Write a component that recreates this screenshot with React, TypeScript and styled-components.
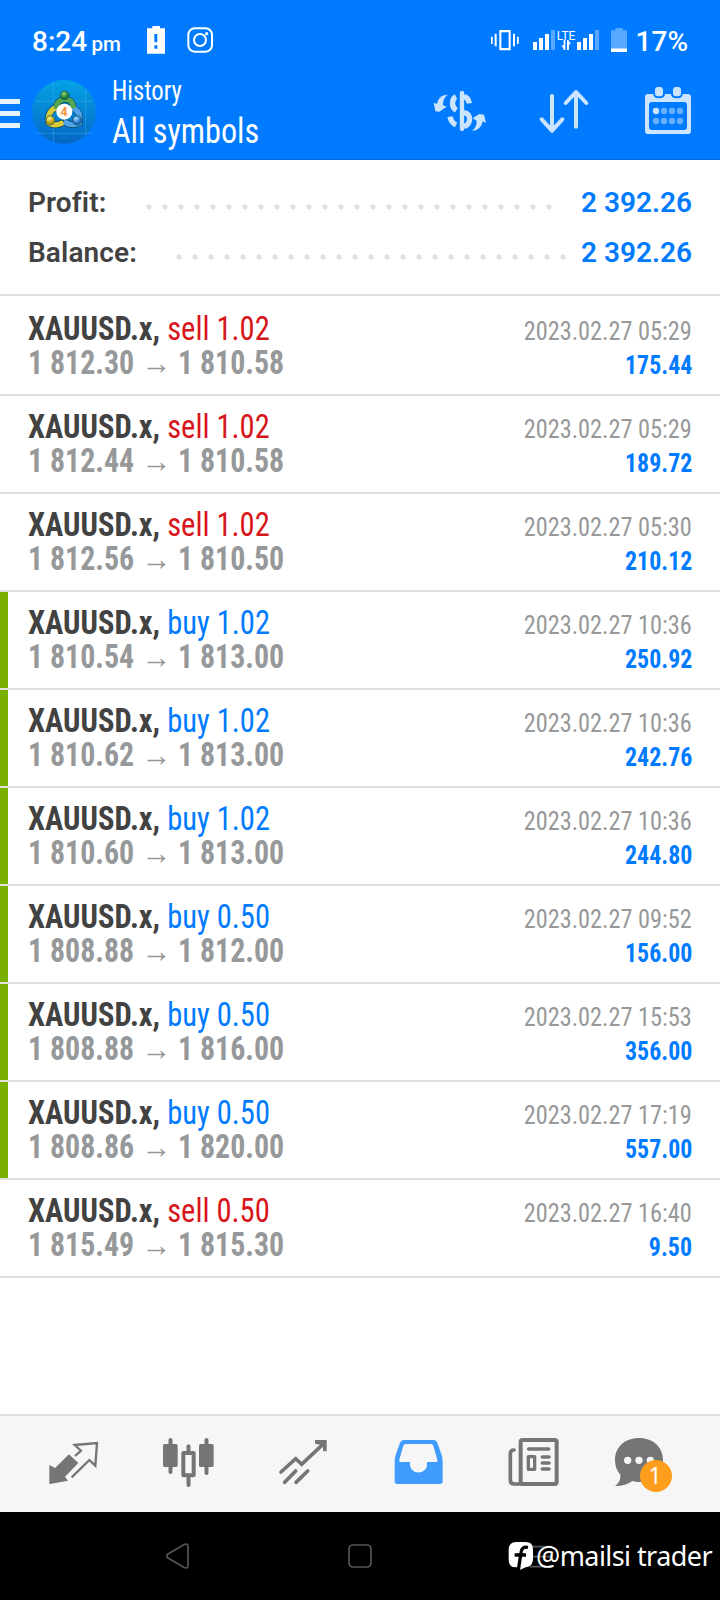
import React from "react";
import styled, { createGlobalStyle } from "styled-components";

const blue = "#007bff";

const Global = createGlobalStyle`
  * { box-sizing: border-box; }
  body { margin: 0; background: #fff; font-family: Roboto, sans-serif; }
  svg { display: block; flex: none; }
`;

const Screen = styled.div`
  position: relative;
  width: 720px;
  height: 1600px;
  display: flex;
  flex-direction: column;
  overflow: hidden;
  background: #fff;
`;

const Narrow = styled.span<{ $scale?: number; $right?: boolean }>`
  display: inline-block;
  white-space: pre;
  font-stretch: 75%;
  transform: scaleX(${(p) => p.$scale ?? 1});
  transform-origin: ${(p) => (p.$right ? "right" : "left")} center;
`;

const Header = styled.header`
  height: 160px;
  background: ${blue};
  border-bottom: 1px solid #0a6ad4;
  color: #fff;
`;

const StatusBar = styled.div`
  display: flex;
  justify-content: space-between;
  height: 70px;
  padding: 20px 32px 0 32px;
  line-height: 44px;
  font-size: 28px;
  font-weight: 500;
`;

const StatusGroup = styled.div`
  display: flex;
  align-items: flex-start;
  svg { margin-top: 6px; }
`;

const Clock = styled.span`
  width: 112px;
  white-space: nowrap;
  word-spacing: -2.5px;
  small { font-size: 20.5px; }
`;

const Percent = styled.span`
  margin-left: 3px;
`;

const AppBar = styled.div`
  display: flex;
  height: 90px;
  padding-right: 22px;
`;

const MenuButton = styled.div`
  display: flex;
  flex-direction: column;
  gap: 7px;
  width: 32px;
  padding-top: 29px;
`;

const MenuLine = styled.span`
  width: 20px;
  height: 5px;
  background: #e6f2ff;
`;

const LogoSvg = styled.svg`
  margin-top: 10px;
`;

const Titles = styled.div`
  flex: 1;
  padding-left: 16px;
  display: flex;
  flex-direction: column;
`;

const Caption = styled.div`
  font-size: 27px;
  line-height: 42px;
`;

const Title = styled.div`
  font-size: 35px;
  line-height: 39px;
`;

const Actions = styled.div`
  display: flex;
  gap: 44px;
  padding-top: 11px;
`;

const Summary = styled.section`
  height: 136px;
  padding: 18px 28px 0;
  border-bottom: 2px solid #e0e0e0;
`;

const SummaryLine = styled.div`
  display: flex;
  align-items: baseline;
  height: 50px;
  line-height: 50px;
  font-size: 28px;
  font-weight: 650;
  color: #424242;
`;

const SummaryLabel = styled.span<{ $width: number }>`
  width: ${(p) => p.$width}px;
  white-space: nowrap;
  letter-spacing: 0.1px;
`;

const Dots = styled.span<{ $count: number }>`
  width: ${(p) => p.$count * 16}px;
  height: 10px;
  background: radial-gradient(circle at 8px 5px, #e1e1e1 2.3px, transparent 3px) 0 0 / 16px 10px repeat-x;
`;

const SummaryValue = styled.span`
  flex: 1;
  text-align: right;
  white-space: nowrap;
  color: ${blue};
`;

const Deals = styled.main`
  flex: 1;
  padding-top: 2px;
`;

const DealRow = styled.article<{ $marked: boolean }>`
  height: 98px;
  padding: 14px 28px 0;
  border-bottom: 2px solid #e0e0e0;
  box-shadow: ${(p) => (p.$marked ? "inset 8px 0 #7ab000" : "none")};
`;

const DealLine = styled.div`
  display: flex;
  justify-content: space-between;
  align-items: baseline;
  height: 34px;
  line-height: 34px;
  white-space: nowrap;
`;

const Symbol = styled(Narrow)`
  font-size: 33px;
  font-weight: 700;
  color: #424242;
`;

const Side = styled.span<{ $buy: boolean }>`
  font-weight: 400;
  color: ${(p) => (p.$buy ? blue : "#d8151b")};
`;

const Prices = styled(Narrow)`
  font-size: 33px;
  font-weight: 700;
  color: #969899;
`;

const When = styled(Narrow)`
  font-size: 26px;
  color: #969899;
`;

const Profit = styled(Narrow)`
  font-size: 26px;
  font-weight: 700;
  color: ${blue};
`;

const TabBar = styled.nav`
  display: flex;
  height: 98px;
  padding-left: 16px;
  background: #f6f6f6;
  border-top: 2px solid #e0e0e0;
`;

const Tab = styled.div`
  position: relative;
  width: 115px;
  display: flex;
  align-items: center;
  justify-content: center;
`;

const Badge = styled.span`
  position: absolute;
  left: 49px;
  top: 44px;
  width: 32px;
  height: 32px;
  padding-right: 2px;
  border-radius: 50%;
  background: #ff9d1c;
  color: #fff;
  font: 23px/31px "Noto Sans", sans-serif;
  text-align: center;
`;

const SystemBar = styled.footer`
  display: flex;
  align-items: center;
  justify-content: center;
  gap: 142px;
  height: 88px;
  background: #000;
`;

const Watermark = styled.div`
  position: absolute;
  right: 8px;
  bottom: 22px;
  display: flex;
  align-items: center;
  gap: 2px;
  color: #fff;
  font: 27px/44px "Noto Sans", sans-serif;
  letter-spacing: -0.57px;
  white-space: nowrap;
`;

const StatusLeftIcons = () => (
  <svg width="80" height="28" viewBox="432 78 240 84">
    <path fill="#fff" fillRule="evenodd" d="M457 78h23v7h15v76h-54V85h16zM463 102v25h9v-25zM463 136v10h9v-10z" />
    <g fill="none" stroke="#fff" strokeWidth="6">
      <rect x="565" y="85" width="71" height="70" rx="19" />
      <circle cx="600" cy="120" r="18" />
    </g>
    <circle cx="620" cy="101" r="5" fill="#fff" />
  </svg>
);

const StatusRightIcons = () => (
  <svg width="144" height="28" viewBox="207 78 432 84">
    <g fill="#fff">
      <path fillRule="evenodd" d="M238 90h34v61h-34zM244 97v47h22V97z" />
      <path d="M213 110h5v22h-5zM224 101h6v38h-6zM279 101h6v38h-6zM291 110h5v22h-5zM339 126h12v24h-12zM357 114h12v36h-12zM375 102h12v48h-12zM471 126h12v24h-12zM489 114h12v36h-12zM507 102h12v48h-12z" />
      <path d="M431 120h5v30h-4l-7-14h6zM441 120h4l8 13h-6v17h-6z" />
    </g>
    <path fill="#58a8ff" d="M393 90h12v60h-12zM525 90h12v60h-12zM586 84h22v7h13v54h-48V91h13z" />
    <path fill="#fff" d="M573 145h48v11h-48z" />
    <text x="410" y="120" fontSize="36" fontFamily="Roboto" fontWeight="400" fill="#fff" textLength="56" lengthAdjust="spacingAndGlyphs">LTE</text>
  </svg>
);

const Logo = () => (
  <LogoSvg width="64" height="64" viewBox="96 240 192 192">
    <defs>
      <linearGradient id="sky" x1="0" y1="0" x2="0" y2="1">
        <stop offset="0" stopColor="#05a3e6" />
        <stop offset="1" stopColor="#0566c4" />
      </linearGradient>
      <radialGradient id="green" cx=".4" cy=".3"><stop offset="0" stopColor="#8fd07a" /><stop offset="1" stopColor="#1f7d35" /></radialGradient>
      <radialGradient id="gold" cx=".4" cy=".3"><stop offset="0" stopColor="#fff07a" /><stop offset="1" stopColor="#b39a12" /></radialGradient>
      <radialGradient id="azure" cx=".4" cy=".3"><stop offset="0" stopColor="#a5dcff" /><stop offset="1" stopColor="#1c6cc0" /></radialGradient>
    </defs>
    <circle cx="192" cy="336" r="96" fill="url(#sky)" />
    <path d="M160 246v180M257 266v140M106 304h172M106 400h172" stroke="#3fb0ea" strokeWidth="2" opacity=".7" />
    <g fill="none" strokeLinecap="round">
      <g stroke="#0b4d6c" strokeWidth="21">
        <path d="M169 322c2-28 46-34 50-2" />
        <path d="M170 322c-20 8-28 26-24 46 12 8 26 8 38 2" />
        <path d="M214 322c22 8 28 26 24 46-12 8-28 8-40 0" />
      </g>
      <path d="M170 322c-20 8-28 26-24 46 12 8 26 8 38 2" stroke="#d9cc3a" strokeWidth="16" />
      <path d="M214 322c22 8 28 26 24 46-12 8-28 8-40 0" stroke="#4fa3e6" strokeWidth="16" />
      <path d="M169 320c2-26 46-32 50-2" stroke="#52a852" strokeWidth="16" />
    </g>
    <g stroke="#0b4d5c" strokeWidth="2">
      <circle cx="194" cy="286" r="13" fill="url(#green)" />
      <circle cx="151" cy="361" r="14" fill="url(#gold)" />
      <circle cx="231" cy="361" r="14" fill="url(#azure)" />
    </g>
    <circle cx="193" cy="335" r="24" fill="#fff" />
    <text x="192" y="349" textAnchor="middle" fontFamily="Roboto" fontWeight="700" fontSize="39" fill="#f5913e">4</text>
  </LogoSvg>
);

const CurrencyIcon = () => (
  <svg width="60" height="60" viewBox="30 243 180 180">
    <g fill="none" stroke="#cce5ff" strokeWidth="13">
      <path d="M126 279V387" strokeLinecap="round" />
      <path strokeWidth="16" d="M108 290c-13 6-15 31 1 41M90 350c2 12 8 20 18 25M132 290c9 2 14 8 16 20M132 338c23 3 22 36 0 41" />
    </g>
    <g fill="#cce5ff">
      <path d="M83 284c-12 10-14 20-14 32l11 4-22 15-12-1-5-26 10 4c3-16 12-28 32-28z" />
      <path d="M156 393c12-10 14-20 14-31l-12-7 20-13 14 2 6 25-10-5c-3 16-12 27-32 29z" />
    </g>
  </svg>
);

const SortIcon = () => (
  <svg width="60" height="60" viewBox="342 243 180 180" fill="none" stroke="#cce5ff" strokeWidth="12" strokeLinecap="round" strokeLinejoin="round">
    <path d="M396 288v104M365 358l31 34 31-34M468 380V277M437 309l31-33 31 33" />
  </svg>
);

const CalendarIcon = () => (
  <svg width="60" height="60" viewBox="654 243 180 180">
    <path fill="#cce5ff" fillRule="evenodd" d="M684 282h16c0 8 6 13 17 13s18-5 18-13h18c0 8 6 13 17 13s18-5 18-13h15q10 0 10 10v100q0 10-10 10H685q-10 0-10-10V292q0-10 9-10zM696 306q-9 0-9 9v66q0 9 9 9h96q9 0 9-9v-66q0-9-9-9z" />
    <rect x="705" y="261" width="24" height="28" rx="9" fill="#cce5ff" />
    <rect x="759" y="261" width="24" height="28" rx="9" fill="#cce5ff" />
    {[333, 363].map((y) =>
      [708, 732, 756, 780].map((x) => (
        <circle key={`${x}-${y}`} cx={x} cy={y} r="9.5" fill={x === 708 && y === 333 ? "#cce5ff" : "#66b0ff"} />
      ))
    )}
  </svg>
);

const grey = "#757575";

const QuotesIcon = () => (
  <svg width="61" height="64" viewBox="129 96 183 192">
    <path fill={grey} d="M148 195l17 9 42-41 28 26-40 41 9 12-54 10q-2 0-2-2z" />
    <path fill="none" stroke={grey} strokeWidth="7" d="M225 168l18-16-19-17 67-6-5 68-18-17-53 52" />
  </svg>
);

const ChartIcon = () => (
  <svg width="61" height="64" viewBox="474 96 183 192">
    <g fill={grey}>
      <rect x="489" y="132" width="44" height="69" rx="5" />
      <rect x="597" y="132" width="44" height="69" rx="5" />
    </g>
    <g fill="none" stroke={grey} strokeWidth="12" strokeLinecap="round">
      <path d="M511.500 120v96M619.500 120v99M565.500 139v14M565.500 234v21" />
      <rect x="550" y="159" width="31" height="67" strokeLinejoin="round" />
    </g>
  </svg>
);

const TradeIcon = () => (
  <svg width="61" height="64" viewBox="819 96 183 192" fill="none" stroke={grey} strokeWidth="11" strokeLinecap="round">
    <path d="M843 216l44-40 18 17 66-62M854 247l33-34M888 247l35-34" />
    <path fill={grey} stroke="none" d="M945 120h35v34h-11v-18l-24-5z" />
  </svg>
);

const HistoryIcon = () => (
  <svg width="61" height="64" viewBox="84 96 183 192">
    <path fill="#409cff" fillRule="evenodd" d="M131 120h90q8 0 11 8l12 34q4 10 4 22v60q0 8-8 8H112q-8 0-8-8v-60q0-12 4-22l12-34q3-8 11-8zM137 132q-5 0-7 5l-12 42q-2 7 5 7h27v6c0 34 51 34 51 0v-6h26q7 0 5-7l-12-42q-2-5-7-5z" />
  </svg>
);

const NewsIcon = () => (
  <svg width="61" height="64" viewBox="429 96 183 192" fill="none" stroke={grey} strokeWidth="12" strokeLinecap="round" strokeLinejoin="round">
    <rect x="482" y="120" width="108" height="132" rx="6" />
    <path d="M462 150q-11 0-11 11v80q0 11 12 11h30M506 147h60M547 171h20M547 189h20M547 207h20" strokeWidth="11" />
    <rect x="505" y="170" width="19" height="38" strokeWidth="10" />
  </svg>
);

const ChatIcon = () => (
  <svg width="73" height="64" viewBox="756 96 219 192">
    <path fill={grey} d="M837 114c43 0 72 28 72 66s-29 66-72 66q-12 0-20-3c-12 9-30 15-52 15 12-9 17-19 16-34-11-12-16-27-16-44 0-38 29-66 72-66z" />
    <g fill="#f6f6f6">
      <circle cx="803" cy="181" r="11" />
      <circle cx="837" cy="181" r="11" />
      <circle cx="871" cy="181" r="11" />
    </g>
  </svg>
);

const navStroke = { fill: "none", stroke: "#565656", strokeWidth: 5, strokeLinejoin: "round" as const };

const FacebookMark = () => (
  <svg width="26" height="30" viewBox="441 429 78 90">
    <path fill="#fff" d="M466 432h28q22 0 22 22v30q0 22-22 24l-18 8 2-8h-12q-23 0-23-23v-30q0-23 23-23z" />
    <path fill="none" stroke="#000" strokeWidth="10" d="M501 448c-14-2-20 4-21 16l-8 52M461 471h34" />
  </svg>
);

type Deal = { side: "buy" | "sell"; volume: string; open: string; close: string; when: string; profit: string; marked: boolean };

const d = (side: "buy" | "sell", volume: string, open: string, close: string, when: string, profit: string, marked = false): Deal =>
  ({ side, volume, open, close, when, profit, marked });

const deals: Deal[] = [
  d("sell", "1.02", "1 812.30", "1 810.58", "2023.02.27 05:29", "175.44"),
  d("sell", "1.02", "1 812.44", "1 810.58", "2023.02.27 05:29", "189.72"),
  d("sell", "1.02", "1 812.56", "1 810.50", "2023.02.27 05:30", "210.12"),
  d("buy", "1.02", "1 810.54", "1 813.00", "2023.02.27 10:36", "250.92", true),
  d("buy", "1.02", "1 810.62", "1 813.00", "2023.02.27 10:36", "242.76", true),
  d("buy", "1.02", "1 810.60", "1 813.00", "2023.02.27 10:36", "244.80", true),
  d("buy", "0.50", "1 808.88", "1 812.00", "2023.02.27 09:52", "156.00", true),
  d("buy", "0.50", "1 808.88", "1 816.00", "2023.02.27 15:53", "356.00", true),
  d("buy", "0.50", "1 808.86", "1 820.00", "2023.02.27 17:19", "557.00", true),
  d("sell", "0.50", "1 815.49", "1 815.30", "2023.02.27 16:40", "9.50"),
];

const tabs = [QuotesIcon, ChartIcon, TradeIcon, HistoryIcon, NewsIcon, ChatIcon];

export default function App() {
  return (
    <Screen>
      <Global />
      <Header>
        <StatusBar>
          <StatusGroup>
            <Clock>8:24 <small>pm</small></Clock>
            <StatusLeftIcons />
          </StatusGroup>
          <StatusGroup>
            <StatusRightIcons />
            <Percent>17%</Percent>
          </StatusGroup>
        </StatusBar>
        <AppBar>
          <MenuButton>
            <MenuLine />
            <MenuLine />
            <MenuLine />
          </MenuButton>
          <Logo />
          <Titles>
            <Caption><Narrow $scale={0.915}>History</Narrow></Caption>
            <Title><Narrow $scale={0.92}>All symbols</Narrow></Title>
          </Titles>
          <Actions>
            <CurrencyIcon />
            <SortIcon />
            <CalendarIcon />
          </Actions>
        </AppBar>
      </Header>
      <Summary>
        <SummaryLine>
          <SummaryLabel $width={112.5}>Profit:</SummaryLabel>
          <Dots $count={26} />
          <SummaryValue>2 392.26</SummaryValue>
        </SummaryLine>
        <SummaryLine>
          <SummaryLabel $width={142.5}>Balance:</SummaryLabel>
          <Dots $count={25} />
          <SummaryValue>2 392.26</SummaryValue>
        </SummaryLine>
      </Summary>
      <Deals>
        {deals.map((deal, i) => (
          <DealRow key={i} $marked={deal.marked}>
            <DealLine>
              <Symbol $scale={0.926}>XAUUSD.x, <Side $buy={deal.side === "buy"}>{deal.side} {deal.volume}</Side></Symbol>
              <When $right $scale={0.935}>{deal.when}</When>
            </DealLine>
            <DealLine>
              <Prices $scale={0.906}>{deal.open} → {deal.close}</Prices>
              <Profit $right $scale={0.918}>{deal.profit}</Profit>
            </DealLine>
          </DealRow>
        ))}
      </Deals>
      <TabBar>
        {tabs.map((Icon, i) => (
          <Tab key={i}>
            <Icon />
            {i === 5 && <Badge>1</Badge>}
          </Tab>
        ))}
      </TabBar>
      <SystemBar>
        <svg width="40" height="40" viewBox="474 408 120 120" {...navStroke}>
          <path d="M504 462l47-28q13-6 13 7v54q0 13-13 7l-47-28q-8-6 0-12z" />
        </svg>
        <svg width="40" height="40" viewBox="1020 408 120 120" {...navStroke}>
          <rect x="1047" y="435" width="66" height="66" rx="12" />
        </svg>
        <svg width="40" height="40" viewBox="486 408 120 120" {...navStroke}>
          <path d="M510 440h66M510 470h66M510 500h66" />
        </svg>
      </SystemBar>
      <Watermark>
        <FacebookMark />
        <span>@mailsi trader</span>
      </Watermark>
    </Screen>
  );
}
